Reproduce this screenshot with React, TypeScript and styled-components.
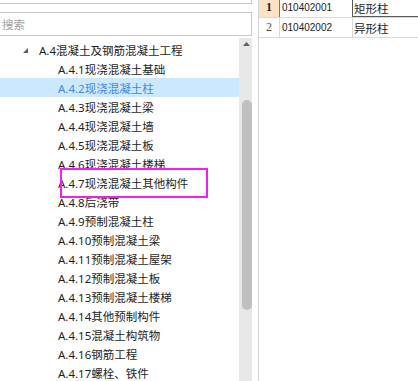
import React from "react";
import styled, { createGlobalStyle } from "styled-components";

const GlobalStyle = createGlobalStyle`
  html, body {
    margin: 0;
    padding: 0;
    background: #ffffff;
  }
  #root {
    width: 418px;
    height: 381px;
    overflow: hidden;
  }
`;

type TreeItem = { label: string; level: 0 | 1; selected?: boolean };

const items: TreeItem[] = [
  { label: "A.4混凝土及钢筋混凝土工程", level: 0 },
  { label: "A.4.1现浇混凝土基础", level: 1 },
  { label: "A.4.2现浇混凝土柱", level: 1, selected: true },
  { label: "A.4.3现浇混凝土梁", level: 1 },
  { label: "A.4.4现浇混凝土墙", level: 1 },
  { label: "A.4.5现浇混凝土板", level: 1 },
  { label: "A.4.6现浇混凝土楼梯", level: 1 },
  { label: "A.4.7现浇混凝土其他构件", level: 1 },
  { label: "A.4.8后浇带", level: 1 },
  { label: "A.4.9预制混凝土柱", level: 1 },
  { label: "A.4.10预制混凝土梁", level: 1 },
  { label: "A.4.11预制混凝土屋架", level: 1 },
  { label: "A.4.12预制混凝土板", level: 1 },
  { label: "A.4.13预制混凝土楼梯", level: 1 },
  { label: "A.4.14其他预制构件", level: 1 },
  { label: "A.4.15混凝土构筑物", level: 1 },
  { label: "A.4.16钢筋工程", level: 1 },
  { label: "A.4.17螺栓、铁件", level: 1 },
];

const rows = [
  { no: 1, code: "010402001", name: "矩形柱", active: true },
  { no: 2, code: "010402002", name: "异形柱", active: false },
];

const App = () => {
  return (
    <>
      <GlobalStyle />
      <Page>
        <LeftPanel>
          <TopBox />
          <SearchBox>
            <Placeholder>搜索</Placeholder>
          </SearchBox>
          <Tree>
            <TreeList>
              {items.map((it) => (
                <TreeRow key={it.label} $selected={!!it.selected}>
                  {it.level === 0 && (
                    <Expander width="6" height="6" viewBox="0 0 6 6">
                      <polygon points="5,0 5,5 0,5" fill="#5c5c5c" />
                    </Expander>
                  )}
                  <TreeLabel $level={it.level} $selected={!!it.selected}>
                    {it.label}
                  </TreeLabel>
                </TreeRow>
              ))}
            </TreeList>
            <ScrollTrack>
              <UpArrow width="7" height="4" viewBox="0 0 7 4">
                <polygon points="0,4 3.5,0 7,4" fill="#606060" />
              </UpArrow>
              <Thumb />
            </ScrollTrack>
          </Tree>
        </LeftPanel>
        <RightPanel>
          <Grid>
            {rows.map((r) => (
              <GridRow key={r.no}>
                <RowHeader $active={r.active}>{r.no}</RowHeader>
                <CodeCell>{r.code}</CodeCell>
                <NameCell $active={r.active}>{r.name}</NameCell>
              </GridRow>
            ))}
          </Grid>
        </RightPanel>
        <Callout />
      </Page>
    </>
  );
};

export default App;

const Page = styled.div`
  position: relative;
  display: flex;
  width: 418px;
  height: 381px;
  background: #ffffff;
`;

const Callout = styled.div`
  position: absolute;
  left: 60px;
  top: 168px;
  width: 144px;
  height: 26px;
  border: 2px solid #f01ef0;
  pointer-events: none;
`;

const LeftPanel = styled.section`
  width: 252px;
  display: flex;
  flex-direction: column;
  flex-shrink: 0;
`;

const TopBox = styled.div`
  height: 3px;
  border-bottom: 1px solid #c9c9c9;
  border-right: 1px solid #c9c9c9;
`;

const SearchBox = styled.div`
  margin-top: 8px;
  height: 22px;
  border: 1px solid #c9c9c9;
  border-left: none;
  display: flex;
  align-items: center;
  padding-left: 2px;
`;

const Placeholder = styled.span`
  font-family: "Noto Sans CJK SC", sans-serif;
  font-size: 11.5px;
  color: #a0a0a0;
`;

const Tree = styled.div`
  margin-top: 2px;
  flex: 1;
  display: flex;
  min-height: 0;
`;

const TreeList = styled.ul`
  list-style: none;
  margin: 0;
  padding: 2px 0 0 0;
  width: 239px;
  overflow: hidden;
`;

const TreeRow = styled.li<{ $selected: boolean }>`
  height: 19px;
  display: flex;
  align-items: center;
  background: ${(p) => (p.$selected ? "#cce8ff" : "transparent")};
  position: relative;
`;

const Expander = styled.svg`
  position: absolute;
  left: 23px;
  top: 8px;
`;

const TreeLabel = styled.span<{ $level: number; $selected: boolean }>`
  padding-left: ${(p) => (p.$level === 0 ? 39 : 58)}px;
  font-family: "Noto Sans", "Noto Sans CJK SC", sans-serif;
  font-size: 11.5px;
  color: ${(p) => (p.$selected ? "#3b8be0" : "#1e1e1e")};
  white-space: nowrap;
`;

const ScrollTrack = styled.div`
  width: 13px;
  background: #e8e8e8;
  display: flex;
  flex-direction: column;
  align-items: center;
`;

const UpArrow = styled.svg`
  margin-top: 4px;
  margin-left: 1px;
`;

const Thumb = styled.div`
  margin-top: 54px;
  margin-left: 2px;
  width: 10px;
  height: 210px;
  border-radius: 5px;
  background: #c0c0c0;
`;

const RightPanel = styled.section`
  margin-left: 6px;
  flex: 1;
  border-left: 1px solid #d4d4d4;
  overflow: hidden;
`;

const Grid = styled.div`
  margin-top: -2px;
  display: flex;
  flex-direction: column;
`;

const GridRow = styled.div`
  display: flex;
  height: 19px;
  border-bottom: 1px solid #dadada;
`;

const RowHeader = styled.div<{ $active: boolean }>`
  width: 20px;
  flex-shrink: 0;
  display: flex;
  align-items: center;
  justify-content: center;
  background: ${(p) => (p.$active ? "#fde2c3" : "#ffffff")};
  border-right: 1px solid ${(p) => (p.$active ? "#3d7ee8" : "#dadada")};
  font-family: "Liberation Serif", serif;
  font-size: 12px;
  font-weight: ${(p) => (p.$active ? 700 : 400)};
  color: ${(p) => (p.$active ? "#222222" : "#555555")};
`;

const CodeCell = styled.div`
  width: 70px;
  flex-shrink: 0;
  padding-left: 2px;
  display: flex;
  align-items: center;
  font-family: "Liberation Sans", sans-serif;
  font-size: 10px;
  color: #222222;
`;

const NameCell = styled.div<{ $active: boolean }>`
  flex: 1;
  display: flex;
  align-items: center;
  padding-left: 1px;
  border-left: 1px solid ${(p) => (p.$active ? "#5a5a5a" : "#dadada")};
  box-shadow: ${(p) => (p.$active ? "inset 0 -1px 0 #5a5a5a" : "none")};
  font-family: "Noto Sans CJK SC", sans-serif;
  font-size: 11.5px;
  color: #222222;
`;
